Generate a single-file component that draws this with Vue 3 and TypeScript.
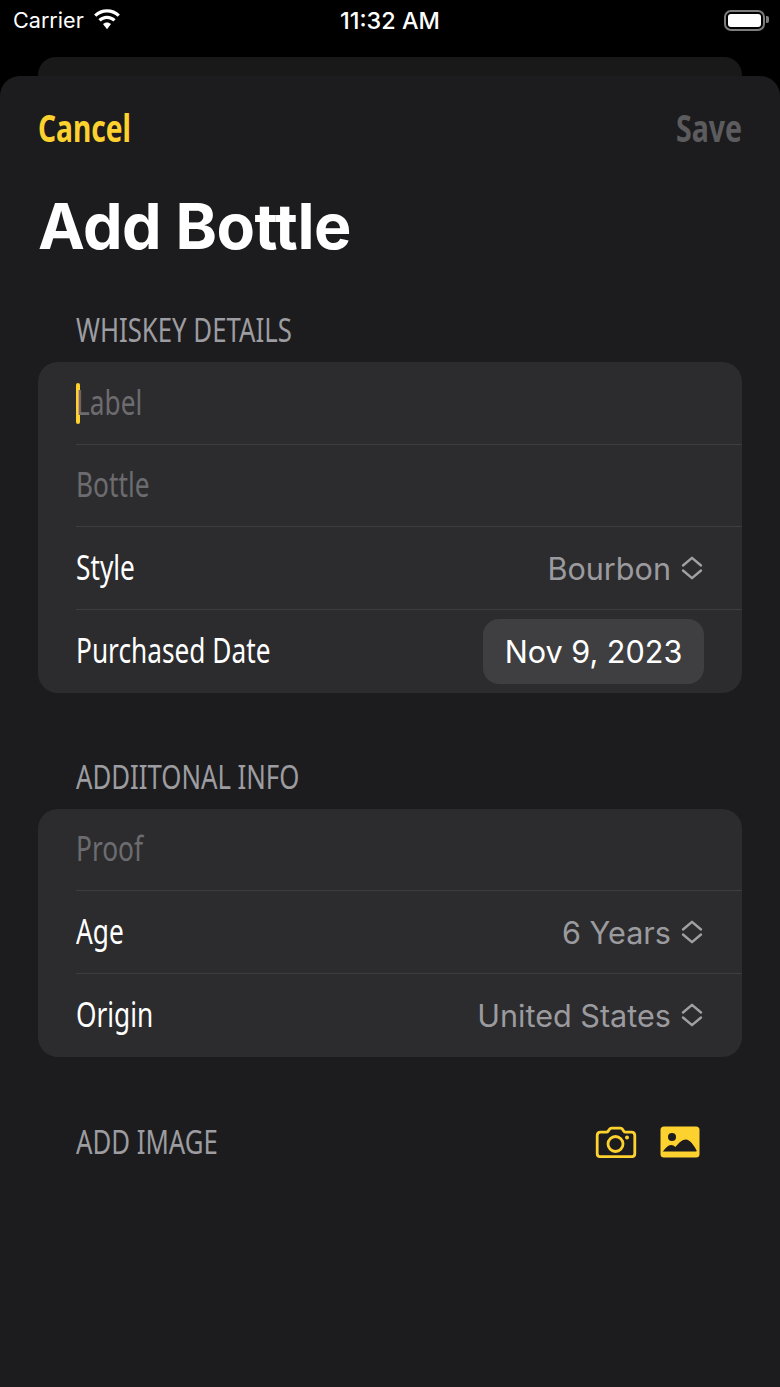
<script setup lang="ts">
interface Row { kind: 'input' | 'picker' | 'date'; label: string; value?: string; caret?: boolean }
const details: Row[] = [
  { kind: 'input', label: 'Label', caret: true },
  { kind: 'input', label: 'Bottle' },
  { kind: 'picker', label: 'Style', value: 'Bourbon' },
  { kind: 'date', label: 'Purchased Date', value: 'Nov 9, 2023' },
]
const extra: Row[] = [
  { kind: 'input', label: 'Proof' },
  { kind: 'picker', label: 'Age', value: '6 Years' },
  { kind: 'picker', label: 'Origin', value: 'United States' },
]
const sections = [
  { title: 'WHISKEY DETAILS', rows: details },
  { title: 'ADDIITONAL INFO', rows: extra },
]
</script>

<template>
  <div class="screen">
    <header class="status">
      <div class="status-left">
        <span>Carrier</span>
        <svg class="wifi" viewBox="0 0 28 21" width="28" height="21">
          <path d="M14 3.400c4.100 0 7.900 1.600 10.700 4.300l2.200-2.300C23.500 2.100 19 .2 14 .2S4.500 2.100 1.100 5.400l2.200 2.300C6.100 5 9.900 3.400 14 3.400z" fill="#fff"/>
          <path d="M14 10c2.400 0 4.600.9 6.300 2.500l2.300-2.300C20.300 8 17.300 6.800 14 6.800S7.700 8 5.400 10.200l2.300 2.300C9.400 10.900 11.600 10 14 10z" fill="#fff"/>
          <path d="M14 13.400c-1.500 0-2.900.6-4 1.500l4 5.300 4-5.300c-1.100-.9-2.500-1.500-4-1.500z" fill="#fff"/>
        </svg>
      </div>
      <span class="time">11:32 AM</span>
      <div class="battery"><span class="battery-fill"></span><span class="battery-nub"></span></div>
    </header>

    <div class="back-card"></div>

    <main class="sheet">
      <nav class="nav">
        <span class="cancel">Cancel</span>
        <span class="save">Save</span>
      </nav>
      <h1 class="title">Add Bottle</h1>

      <section v-for="s in sections" :key="s.title" class="section">
        <h2 class="section-title"><span class="cond">{{ s.title }}</span></h2>
        <div class="card">
          <div v-for="r in s.rows" :key="r.label" class="row">
            <span v-if="r.caret" class="caret"></span>
            <span class="label" :class="{ placeholder: r.kind === 'input' }">{{ r.label }}</span>
            <span v-if="r.kind === 'picker'" class="picker">
              <span class="value">{{ r.value }}</span>
              <svg class="chevrons" viewBox="0 0 22 24" width="22" height="24">
                <path d="M2 9.500 11 1.800 20 9.500M2 14.500 11 22.200 20 14.500" fill="none" stroke="#a0a0a4" stroke-width="2.400" stroke-linecap="round" stroke-linejoin="round"/>
              </svg>
            </span>
            <span v-else-if="r.kind === 'date'" class="date">{{ r.value }}</span>
          </div>
        </div>
      </section>

      <section class="image-row">
        <h2 class="section-title"><span class="cond">ADD IMAGE</span></h2>
        <div class="icons">
          <svg viewBox="0 0 42 32" width="42" height="32">
            <path d="M5.500 6.200h5.700c1 0 1.600-.4 2.200-1.300l.9-1.400c.6-.9 1.200-1.300 2.200-1.300h9c1 0 1.600.4 2.200 1.300l.9 1.400c.6.900 1.200 1.300 2.200 1.300h5.700c2 0 3.300 1.300 3.300 3.300v17.900c0 2-1.300 3.300-3.300 3.300H5.500c-2 0-3.300-1.300-3.300-3.300V9.500c0-2 1.300-3.300 3.300-3.300z" fill="none" stroke="#fdd12e" stroke-width="2.800"/>
            <circle cx="20.500" cy="18" r="7.500" fill="none" stroke="#fdd12e" stroke-width="2.800"/>
            <circle cx="32" cy="11.500" r="2" fill="#fdd12e"/>
          </svg>
          <svg viewBox="0 0 40 32" width="40" height="32">
            <rect x="0.500" y="0.500" width="39" height="31" rx="3.500" fill="#fdd12e"/>
            <circle cx="12" cy="11" r="4" fill="#1c1c1e"/>
            <path d="M3 25.500c2.500-3.500 5-6.500 8-6.500 1.900 0 3.200.9 4.400 2.100 3.400-4.200 6.800-7.600 10.600-7.600 3.600 0 7.500 5 10.600 11.100.2.500 0 .9-.5.900H3.500c-.5 0-.8-.4-.5-.9z" fill="#1c1c1e"/>
          </svg>
        </div>
      </section>
    </main>
  </div>
</template>

<style>
html, body { margin: 0; background: #000; }
</style>

<style scoped>
.screen {
  width: 780px;
  height: 1387px;
  background: #000;
  position: relative;
  overflow: hidden;
  font-family: Inter, "Liberation Sans", sans-serif;
  color: #fff;
}
.status {
  height: 40px;
  display: flex;
  align-items: center;
  justify-content: space-between;
  padding: 0 15px 0 13px;
  position: relative;
}
.status-left { display: flex; align-items: center; gap: 9px; font-size: 21.6px; }
.wifi { margin-top: -2px; }
.time { position: absolute; left: 0; right: 0; text-align: center; font-weight: 500; font-size: 23.4px; }
.battery {
  width: 41px;
  height: 21px;
  box-sizing: border-box;
  border: 2px solid #7d7d7d;
  border-radius: 7px;
  padding: 2px;
  position: relative;
}
.battery-fill { display: block; height: 100%; background: #fff; border-radius: 3px; }
.battery-nub {
  position: absolute;
  right: -6px;
  top: 4px;
  width: 3px;
  height: 7px;
  background: #7d7d7d;
  border-radius: 0 2px 2px 0;
}
.back-card {
  height: 40px;
  margin: 17px 38px 0;
  background: #19191a;
  border-radius: 18px 18px 0 0;
}
.sheet {
  position: absolute;
  top: 76px;
  left: 0;
  right: 0;
  bottom: 0;
  background: #1c1c1e;
  border-radius: 20px 20px 0 0;
  padding: 0 38px;
}
.cond, .label, .cancel, .save {
  font-family: "Noto Sans", sans-serif;
  display: inline-block;
  transform-origin: left center;
}
.nav {
  display: flex;
  justify-content: space-between;
  padding-top: 28px;
  height: 46px;
  align-items: center;
  font-size: 38px;
  font-weight: 700;
}
.cancel { color: #fdd12e; transform: scaleX(0.74); }
.save { color: #5c5c5f; transform: scaleX(0.75); transform-origin: right center; }
.title {
  margin: 39px 0 0;
  font-size: 62.8px;
  line-height: 74px;
  font-weight: 700;
  letter-spacing: -0.5px;
}
.section-title {
  margin: 0;
  padding-left: 37.500px;
  font-size: 33px;
  font-weight: 400;
  color: #9c9ca1;
  height: 60px;
  line-height: 60px;
  white-space: nowrap;
}
.cond { transform: scaleX(0.78); }
.section:first-of-type .section-title { margin-top: 37px; }
.section + .section { margin-top: 54px; }
.card {
  background: #2c2c2e;
  border-radius: 20px;
  overflow: hidden;
  margin-top: 2px;
}
.row {
  height: 82.670px;
  margin-left: 38px;
  box-sizing: border-box;
  display: flex;
  align-items: center;
  justify-content: space-between;
  padding-right: 38px;
  border-bottom: 1px solid #3d3d40;
  position: relative;
}
.row:last-child { border-bottom: 0; }
.label { font-size: 35px; color: #fff; transform: scaleX(0.75); white-space: nowrap; padding-bottom: 3px; margin-left: -0.500px; }
.label.placeholder { color: #6c6c70; }
.caret {
  position: absolute;
  left: 0;
  top: 21px;
  width: 4px;
  height: 41px;
  border-radius: 2px;
  background: #fdd12e;
}
.picker { display: flex; align-items: center; gap: 10px; color: #9b9b9f; font-size: 30.6px; margin-right: 1px; }
.chevrons { display: block; }
.date {
  width: 221px;
  height: 65px;
  background: #3f3f42;
  border-radius: 16px;
  display: flex;
  align-items: center;
  justify-content: center;
  font-size: 30.6px;
}
.image-row {
  display: flex;
  align-items: center;
  justify-content: space-between;
  margin-top: 55px;
  padding-right: 42px;
}
.icons { display: flex; align-items: center; gap: 23px; }
</style>
